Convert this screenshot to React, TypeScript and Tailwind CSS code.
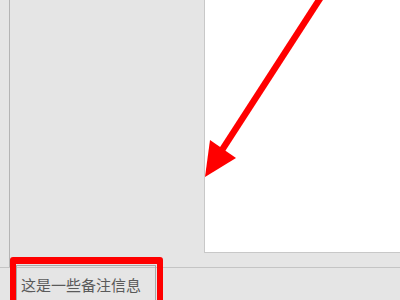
import React from "react";

export default function App() {
  return (
    <div className="relative w-[400px] h-[300px] overflow-hidden bg-[#e5e5e5]" style={{ fontFamily: '"Noto Sans CJK SC", "Noto Sans", sans-serif' }}>
      {/* top area */}
      <div className="flex h-[268px] border-b border-[#c4c4c4]">
        <div className="w-[9px] shrink-0" />
        <div className="flex flex-1 border-l border-[#b4b4b4]">
          <div className="w-[194px] shrink-0" />
          <div className="flex-1 h-[253px] bg-white border-l border-b border-[#c8c8c8]" />
        </div>
      </div>
      {/* bottom: text field */}
      <div className="pl-[16px]">
        <div className="-mt-[3px] w-[140px] h-[40px] border-l border-t border-r border-[#a9a9a9] pl-[4px] pt-[8px] text-[15px] leading-[22px] text-[#5a5a5a]">
          这是一些备注信息
        </div>
      </div>
      {/* red annotation arrow */}
      <svg className="absolute left-0 top-0 pointer-events-none" width="400" height="300" viewBox="0 0 400 300">
        <line x1="321" y1="-3" x2="222" y2="150" stroke="#ff0000" strokeWidth="6.5" />
        <polygon points="205,177 210,140 236,158" fill="#ff0000" />
      </svg>
      {/* red highlight box */}
      <div className="absolute left-[10px] top-[257px] w-[153px] h-[50px] border-[6px] border-t-[7px] border-[#ff0000] rounded-[3px]" />
    </div>
  );
}
